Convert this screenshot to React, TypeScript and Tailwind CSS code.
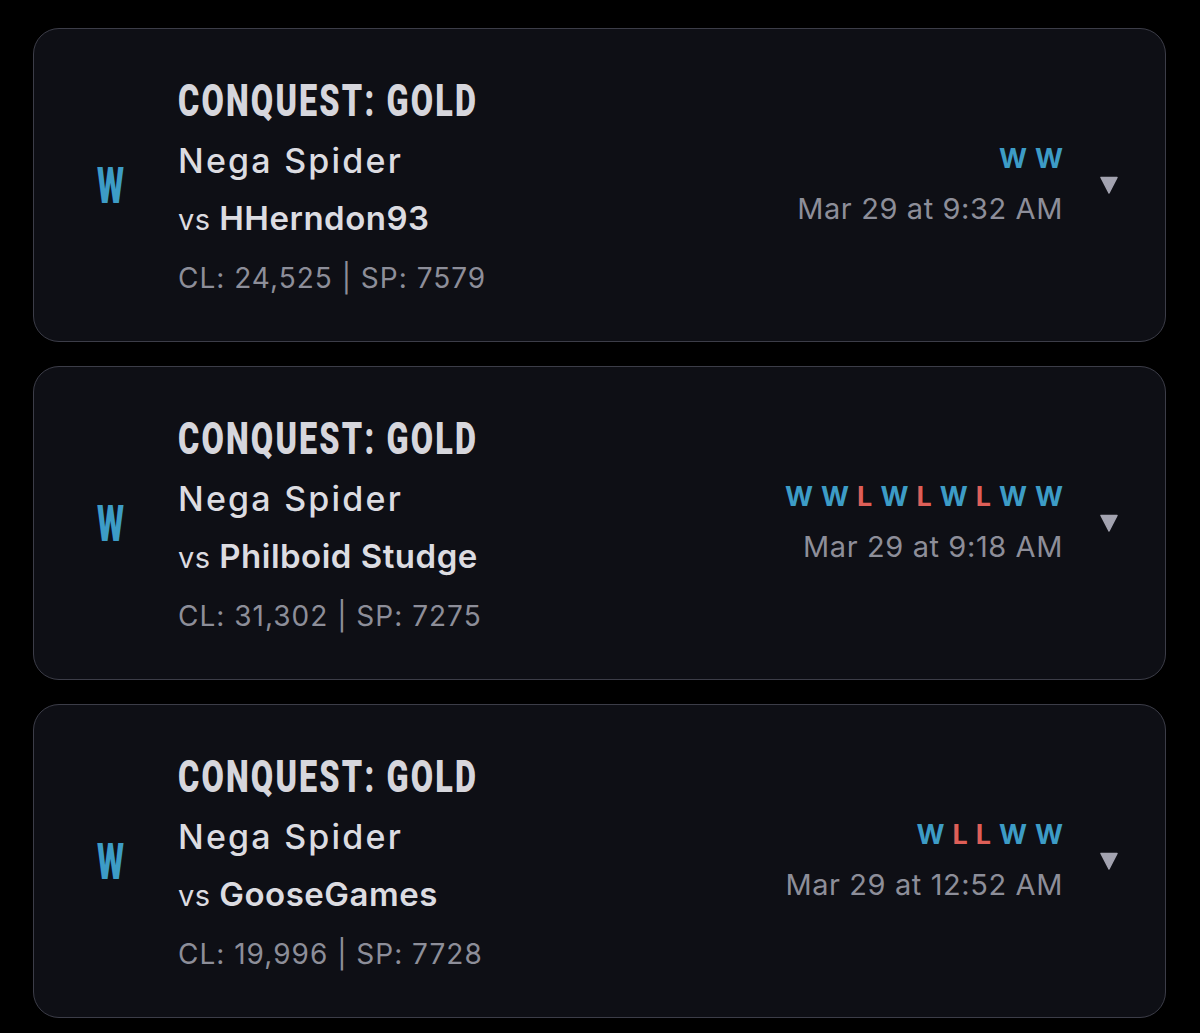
import React from "react";

type Match = {
  opponent: string;
  cl: string;
  sp: string;
  streak: string;
  date: string;
};

const matches: Match[] = [
  { opponent: "HHerndon93", cl: "24,525", sp: "7579", streak: "WW", date: "Mar 29 at 9:32 AM" },
  { opponent: "Philboid Studge", cl: "31,302", sp: "7275", streak: "WWLWLWLWW", date: "Mar 29 at 9:18 AM" },
  { opponent: "GooseGames", cl: "19,996", sp: "7728", streak: "WLLWW", date: "Mar 29 at 12:52 AM" },
];

function Card({ m }: { m: Match }) {
  return (
    <div className="flex items-center h-[314px] rounded-[26px] border-[1.5px] border-[#3c3d48] bg-[#0e0f15] pl-[63px] pr-[47px]">
      <div className="w-[28px] h-[40px] flex items-center">
        <span className="inline-block origin-left scale-x-[0.62] font-['Roboto',sans-serif] text-[50px] font-black leading-none text-[#3d9cc6] translate-y-[1px]">
          W
        </span>
      </div>
      <div className="ml-[53px] flex flex-col font-['Inter',sans-serif] pt-[2px]">
        <div className="h-[63px] flex items-center">
          <span className="inline-block origin-left scale-x-[0.72] whitespace-nowrap font-['Roboto',sans-serif] text-[45px] font-black leading-none tracking-[3px] text-[#d6d6dc]">
            CONQUEST: GOLD
          </span>
        </div>
        <div className="text-[34px] font-medium leading-[58px] tracking-[2.2px] text-[#dcdce1]">Nega Spider</div>
        <div className="leading-[56px] text-[#dcdce1] whitespace-nowrap">
          <span className="text-[29px] font-normal tracking-[0.5px]">vs </span>
          <span className="text-[33px] font-semibold tracking-[0.5px]">{m.opponent}</span>
        </div>
        <div className="text-[28px] leading-[52px] tracking-[1px] text-[#8d8e99]">
          CL: {m.cl} | SP: {m.sp}
        </div>
      </div>
      <div className="ml-auto flex flex-col items-end font-['Inter',sans-serif]">
        <div className="flex gap-[8px] text-[27px] font-bold leading-[36px]">
          {m.streak.split("").map((c, i) => (
            <span key={i} className={c === "W" ? "text-[#3d9cc6]" : "text-[#de5f58]"}>
              {c}
            </span>
          ))}
        </div>
        <div className="mt-[12px] text-[29px] leading-[40px] tracking-[0.6px] text-[#8d8e99]">{m.date}</div>
      </div>
      <div className="ml-[37px] flex items-center">
        <svg width="18" height="18" viewBox="0 0 18 18">
          <path d="M1 1.5 H17 L9 17 Z" fill="#a3a3b0" strokeLinejoin="round" stroke="#a3a3b0" strokeWidth="1.5" />
        </svg>
      </div>
    </div>
  );
}

export default function App() {
  return (
    <div className="min-h-[1033px] w-[1200px] bg-black pt-[28px] pl-[33px] pr-[34px]">
      <div className="flex flex-col gap-[24px]">
        {matches.map((m, i) => (
          <Card key={i} m={m} />
        ))}
      </div>
    </div>
  );
}
